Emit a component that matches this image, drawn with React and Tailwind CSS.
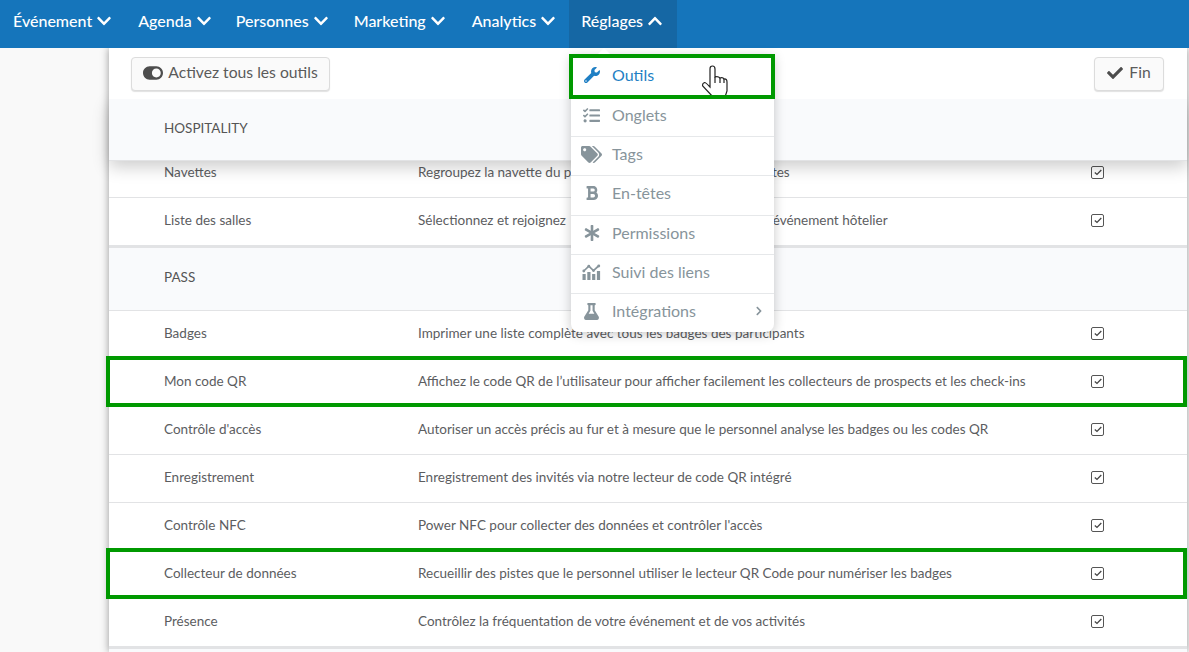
import React from 'react';
import { FaChevronDown, FaChevronUp, FaWrench, FaTasks, FaTags, FaBold, FaAsterisk, FaFlask, FaCheck, FaToggleOn, FaChevronRight } from 'react-icons/fa';

const navItems = [
  { label: 'Événement', className: 'mr-[2px]' },
  { label: 'Agenda', className: '' },
  { label: 'Personnes', className: 'mr-[1px]' },
  { label: 'Marketing', className: 'mr-[2px]' },
  { label: 'Analytics', className: 'mr-[1px]' },
];

const TrackingIcon = () => (
  <svg width="19" height="16" viewBox="0 0 19 16" fill="currentColor">
    <rect x="0.5" y="10" width="3.2" height="6" />
    <rect x="5.3" y="8" width="3.2" height="8" />
    <rect x="10.1" y="10" width="3.2" height="6" />
    <rect x="14.9" y="7" width="3.2" height="9" />
    <path d="M1.8 7 6.8 2.2l4.7 4.4 5-4.6" fill="none" stroke="currentColor" strokeWidth="1.7" />
    <circle cx="1.8" cy="7" r="1.4" />
    <circle cx="6.8" cy="2.2" r="1.4" />
    <circle cx="11.5" cy="6.6" r="1.4" />
    <circle cx="16.8" cy="2" r="1.4" />
  </svg>
);

const HandCursor = () => (
  <svg width="27" height="32" viewBox="-1 -1 27 32" fill="white" stroke="#222" strokeWidth="1.2" className="absolute left-[130px] top-[10px]">
    <path d="M8 3Q8 0 10.5 0Q13 0 13 3V11Q16 10 18 12Q21 11 22 13Q25 12.5 25 16V25L23 31H11L0.7 20Q0 17.5 2.5 16.5Q4 16.5 8 21Z" />
    <path d="M13 11V17M18 12V17M22 13V17" fill="none" />
  </svg>
);

const menuItems = [
  { label: 'Onglets', icon: <FaTasks size={17} /> },
  { label: 'Tags', icon: <FaTags size={21} /> },
  { label: 'En-têtes', icon: <FaBold size={16} /> },
  { label: 'Permissions', icon: <FaAsterisk size={16} /> },
  { label: 'Suivi des liens', icon: <TrackingIcon /> },
  { label: 'Intégrations', icon: <FaFlask size={17} />, arrow: true },
];

const CheckBox = () => (
  <span className="flex h-[13px] w-[13px] items-center justify-center rounded-[2px] border border-[#555] bg-white">
    <svg width="8" height="7" viewBox="0 0 8 7" fill="none" stroke="#444" strokeWidth="1.3">
      <path d="M0.8 3.4 3 5.4 7.3 1" />
    </svg>
  </span>
);

const Row = ({ name, text, highlight }) => (
  <div className="relative flex h-12 items-center border-b border-[#e2e3e5] pb-[3px] pl-[55px] text-[13.5px] text-[#5c5d5f]">
    <div className="w-[254px] shrink-0">{name}</div>
    <div className="w-[673px] shrink-0">{text}</div>
    <CheckBox />
    {highlight && (
      <div className="absolute -left-[3px] right-0 -top-[3px] -bottom-[1px] border-[4px] border-[#009900]" />
    )}
  </div>
);

const App = () => {
  return (
    <div className="h-[652px] w-[1189px] overflow-hidden bg-[#f9f9f9] font-['Lato',sans-serif]">
      <nav className="relative z-30 flex h-12 items-stretch bg-[#1575bb] pl-[1px] text-[16px] font-medium text-white">
        {navItems.map((item) => (
          <div key={item.label} className={`flex items-center gap-1 px-3 pb-[6px] ${item.className}`}>
            {item.label}
            <FaChevronDown size={16} />
          </div>
        ))}
        <div className="flex items-center gap-1 bg-[#1567a4] pb-[6px] pl-3 pr-[14px]">
          Réglages
          <FaChevronUp size={16} />
        </div>
      </nav>

      <main className="relative ml-[109px] mr-[2px] h-[604px] bg-white shadow-[0_0_8px_rgba(0,0,0,0.4)]">
        {/* top bar */}
        <div className="relative z-20 flex h-[51px] items-center justify-between bg-white pl-[22px] pr-[23px]">
          <button className="flex h-[34px] w-[199px] items-center justify-center gap-[5px] rounded border border-[#dcdcdc] bg-[#fafafa] pb-[1px] text-[15.7px] text-[#5b5b5b] shadow-[0_1px_1px_rgba(0,0,0,0.12)]">
            <FaToggleOn size={20} className="text-[#4d4d4d]" />
            Activez tous les outils
          </button>
          <button className="flex h-[34px] w-[70px] items-center justify-center gap-[6px] rounded border border-[#dcdcdc] bg-[#fafafa] pb-[1px] text-[15.7px] text-[#5b5b5b] shadow-[0_1px_1px_rgba(0,0,0,0.12)]">
            <FaCheck size={16} className="text-[#4d4d4d]" />
            Fin
          </button>
        </div>

        {/* sticky section header */}
        <div className="relative z-10 flex h-[62px] items-start border-b border-[#e2e3e5] bg-[#f9fafc] pl-[55px] pt-[19px] text-[13.5px] text-[#555] shadow-[0_6px_16px_rgba(0,0,0,0.2)]">
          HOSPITALITY
        </div>

        <div className="-mt-[11px]">
          <Row name="Navettes" text="Regroupez la navette du personnel et des invités sur vos routes" />
          <Row name="Liste des salles" text={'Sélectionnez et rejoignez\u00a0 les listes de salles pour tout votre événement hôtelier'} />
          <div className="flex h-[65px] items-center border-t-2 border-b border-[#e2e3e5] bg-[#f9fafc] pb-[3px] pl-[55px] text-[13.5px] text-[#555]">
            PASS
          </div>
          <Row name="Badges" text="Imprimer une liste complète avec tous les badges des participants" />
          <Row name="Mon code QR" text="Affichez le code QR de l’utilisateur pour afficher facilement les collecteurs de prospects et les check-ins" highlight />
          <Row name="Contrôle d'accès" text="Autoriser un accès précis au fur et à mesure que le personnel analyse les badges ou les codes QR" />
          <Row name="Enregistrement" text="Enregistrement des invités via notre lecteur de code QR intégré" />
          <Row name="Contrôle NFC" text="Power NFC pour collecter des données et contrôler l'accès" />
          <Row name="Collecteur de données" text="Recueillir des pistes que le personnel utiliser le lecteur QR Code pour numériser les badges" highlight />
          <Row name="Présence" text="Contrôlez la fréquentation de votre événement et de vos activités" />
          <div className="h-[8px] border-t-2 border-[#e2e3e5] bg-[#f9fafc]" />
        </div>

        {/* settings dropdown */}
        <div className="absolute left-[462px] top-[7px] z-40 w-[203px] rounded-b-lg bg-white text-[16px] text-[#87949b] shadow-[0_2px_12px_rgba(0,0,0,0.22)]">
          <div className="absolute left-[26px] top-[-7px] h-0 w-0 border-x-[7px] border-b-[7px] border-x-transparent border-b-white" />
          <div className="relative flex h-[42px] items-center pb-[3px] text-[#1f7fc4]">
            <span className="flex w-[41px] justify-center"><FaWrench size={16} /></span>
            Outils
            <HandCursor />
            <div className="absolute -left-[2px] -right-[1px] top-[-1px] h-[45px] border-[4px] border-[#009900]" />
          </div>
          {menuItems.map((item) => (
            <div key={item.label} className="flex h-[39.2px] items-center border-t border-[#e6e8ea] pb-[4px]">
              <span className="flex w-[41px] justify-center">{item.icon}</span>
              {item.label}
              {item.arrow && <FaChevronRight size={10} className="ml-auto mr-[10px]" />}
            </div>
          ))}
        </div>
      </main>
    </div>
  );
};

export default App;
